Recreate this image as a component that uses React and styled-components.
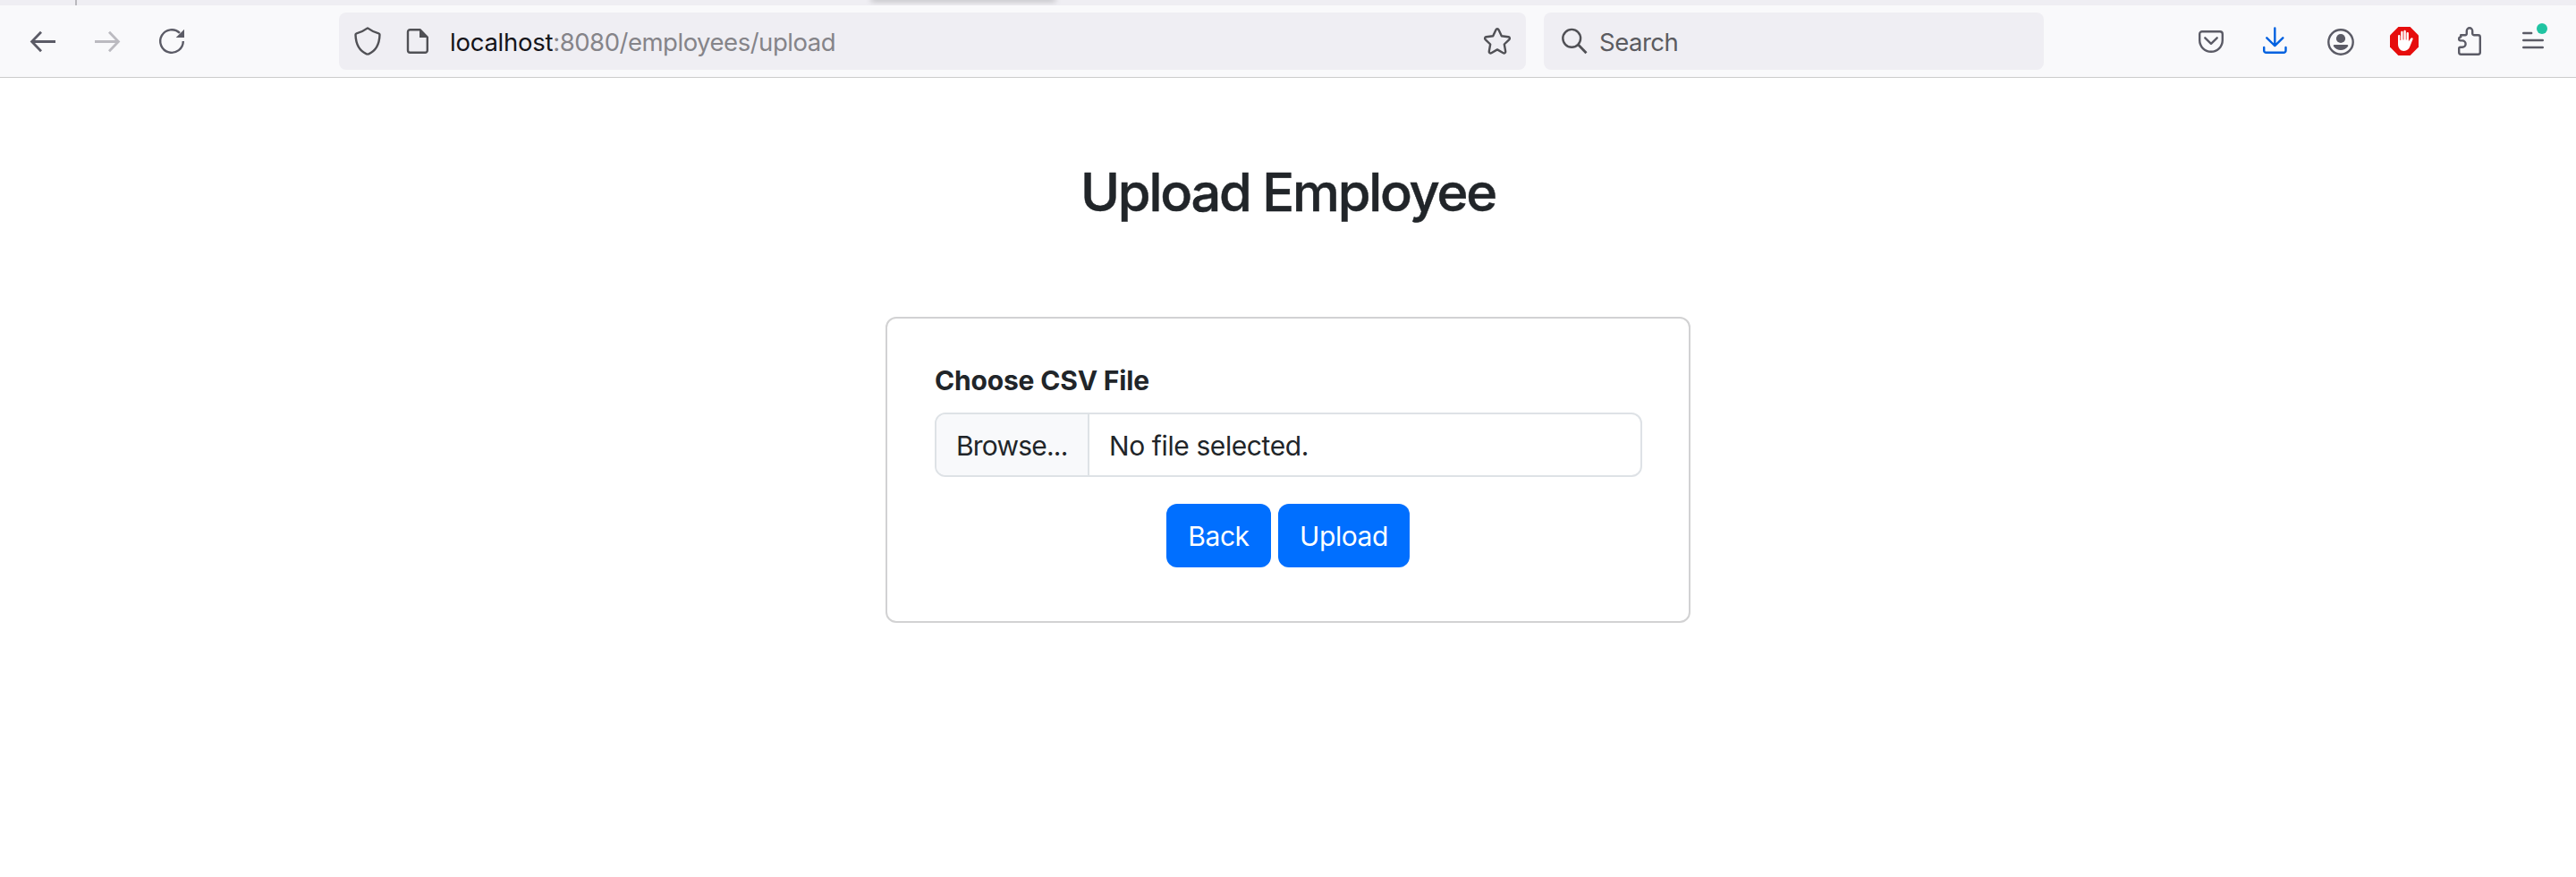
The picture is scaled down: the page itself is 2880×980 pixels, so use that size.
import React from "react";
import styled, { createGlobalStyle } from "styled-components";

const GlobalStyle = createGlobalStyle`
  * { box-sizing: border-box; }
  body {
    margin: 0;
    background: #fff;
    color: #212529;
    font-family: Inter, "Liberation Sans", sans-serif;
  }
`;

const TabStrip = styled.div`
  display: flex;
  height: 6px;
  padding-left: 84px;
  overflow: hidden;
  background: #efeef3;
`;

const TabDivider = styled.div`
  width: 2px;
  height: 6px;
  background: #bab9be;
`;

const ActiveTabEdge = styled.div`
  width: 204px;
  height: 1px;
  margin: -1px 0 0 889px;
  box-shadow: 0 0 6px 1px rgba(0, 0, 0, 0.35);
`;

const Toolbar = styled.header`
  display: flex;
  align-items: center;
  height: 81px;
  padding: 0 12px;
  background: #f9f9fb;
  border-bottom: 1px solid #ccc;
`;

const ToolButton = styled.button`
  display: flex;
  align-items: center;
  justify-content: center;
  width: 72px;
  height: 64px;
  padding: 0;
  border: 0;
  background: none;
  color: ${(p) => (p.$faded ? "#bbbac0" : "#5b5b66")};
`;

const Icon = styled.svg.attrs({ width: 32, height: 32, viewBox: "0 0 32 32", fill: "none" })`
  display: block;
  flex: none;
  overflow: visible;
  stroke-width: 2.4;
  stroke-linejoin: round;
`;

const Field = styled.div`
  display: flex;
  align-items: center;
  width: ${(p) => p.$width}px;
  height: 64px;
  margin-left: ${(p) => p.$offset}px;
  padding: 0 16px 0 ${(p) => p.$inset}px;
  border-radius: 8px;
  background: #efeef3;
  color: #505055;
`;

const Address = styled.span`
  flex: 1;
  padding-top: 2px;
  margin-left: ${(p) => p.$gap}px;
  font-size: 27.5px;
  line-height: 34px;
  letter-spacing: ${(p) => p.$tracking}px;
  color: ${(p) => p.$color};
  white-space: nowrap;
`;

const Host = styled.span`
  color: #15141a;
  letter-spacing: -0.25px;
`;

const PageIcon = styled(Icon)`
  margin-left: 24px;
`;

const Actions = styled.div`
  display: flex;
  margin-left: auto;
`;

const Main = styled.main`
  display: flex;
  flex-direction: column;
  align-items: center;
  padding-top: 92px;
`;

const Title = styled.h1`
  margin: 0;
  font-size: 59.5px;
  font-weight: 500;
  line-height: 71px;
  letter-spacing: -2.2px;
  -webkit-text-stroke: 0.5px #212529;
`;

const Card = styled.form`
  display: flex;
  flex-direction: column;
  width: 900px;
  height: 342px;
  margin-top: 104px;
  padding: 49px 52px 49px 53px;
  border: 2px solid #d2d2d3;
  border-radius: 12px;
`;

const Label = styled.label`
  font-size: 30px;
  font-weight: 700;
  line-height: 40px;
  letter-spacing: -0.18px;
`;

const FilePicker = styled.div`
  display: flex;
  height: 72px;
  margin-top: 16px;
  overflow: hidden;
  border: 2px solid #dee2e6;
  border-radius: 12px;
  font-size: 30px;
  line-height: 70px;
  white-space: nowrap;
`;

const Browse = styled.span`
  width: 171px;
  padding-left: 22px;
  border-right: 2px solid #dee2e6;
  background: #f8f9fb;
  letter-spacing: -0.8px;
`;

const FileName = styled.span`
  padding-left: 22px;
  letter-spacing: -0.4px;
`;

const ButtonRow = styled.div`
  display: flex;
  justify-content: center;
  gap: 8px;
  margin-top: 30px;
  padding-right: 1px;
`;

const PrimaryButton = styled.button`
  width: ${(p) => p.$width}px;
  height: 71px;
  padding: 1px 0 0;
  border: 0;
  border-radius: 12px;
  background: #006fff;
  color: #fff;
  font: 400 30px/70px Inter, "Liberation Sans", sans-serif;
  letter-spacing: -0.45px;
`;

const BackIcon = () => (
  <Icon stroke="currentColor">
    <path d="M30 16.5H4M14 5.8 3.6 16.5 14 27.2" strokeWidth="2.8" strokeLinejoin="miter" />
  </Icon>
);

const ForwardIcon = () => (
  <Icon stroke="currentColor">
    <path d="M2 16.5h26M18 5.8l10.4 10.7L18 27.2" strokeWidth="2.8" strokeLinejoin="miter" />
  </Icon>
);

const ReloadIcon = () => (
  <Icon stroke="currentColor">
    <path d="M28.8 16A12.8 12.8 0 1 1 25 6.9" />
    <path d="M30 2.7V12h-9.3z" fill="currentColor" stroke="none" />
  </Icon>
);

const ShieldIcon = () => (
  <Icon stroke="currentColor">
    <path d="M16 1.4c-3.8 2.8-8 4.9-12.4 5.9-.8.2-1.1.7-1.1 1.5C2.8 19 7.2 27 14.8 30.3c.8.4 1.6.4 2.4 0C24.8 27 29.2 19 29.5 8.8c0-.8-.3-1.3-1.1-1.5C24 6.3 19.8 4.200 16 1.4z" />
  </Icon>
);

const DocumentIcon = () => (
  <PageIcon stroke="currentColor">
    <path d="M7.5 3.2h11l8.3 8.3v14.8a2.5 2.5 0 0 1-2.5 2.5H7.5A2.5 2.5 0 0 1 5 26.3V5.7a2.5 2.5 0 0 1 2.5-2.5z" />
    <path d="M18 2.4 28 12H18z" fill="currentColor" stroke="none" />
  </PageIcon>
);

const StarIcon = () => (
  <Icon stroke="currentColor">
    <path d="M14.5 3.2c.6-1.3 2.4-1.3 3 0l3.3 7.1 7.6 1c1.5.2 2 1.9 1 2.9l-5.6 5.3 1.4 7.9c.2 1.5-1.2 2.5-2.5 1.8L16 25.4l-6.7 3.8c-1.3.7-2.7-.3-2.5-1.8l1.4-7.9-5.600-5.300c-1-1-.5-2.700 1-2.900l7.600-1z" />
  </Icon>
);

const SearchIcon = () => (
  <Icon stroke="currentColor">
    <circle cx="13.2" cy="12.8" r="9.9" />
    <path d="m20.3 19.8 9.2 9.4" strokeWidth="2.8" />
  </Icon>
);

const PocketIcon = () => (
  <Icon stroke="currentColor" strokeLinecap="round">
    <path d="M6 5.2h20a2.8 2.8 0 0 1 2.8 2.8v7a12.8 12.8 0 0 1-25.6 0V8A2.8 2.8 0 0 1 6 5.2z" />
    <path d="m9.3 12.3 6.7 6.5 6.7-6.5" />
  </Icon>
);

const DownloadIcon = () => (
  <Icon stroke="#0061e0" strokeLinecap="round">
    <path d="M15.3 1.5v19M6.3 12.3l9 8.8 9-8.8M3.2 23v3.4a2.4 2.4 0 0 0 2.4 2.4h19.5a2.4 2.4 0 0 0 2.4-2.4V23" />
  </Icon>
);

const AccountIcon = () => (
  <Icon stroke="currentColor">
    <circle cx="17" cy="17" r="13.7" />
    <circle cx="17" cy="13" r="5.1" fill="currentColor" stroke="none" />
    <path d="M10 20h14c1.3 0 1.7 1 .9 2-3.9 5.3-11.9 5.3-15.8 0-.8-1-.4-2 .9-2z" fill="currentColor" stroke="none" />
  </Icon>
);

const BlockerIcon = () => (
  <Icon>
    <path d="M9.4 0h13.2L32 9.4v13.2L22.600 32H9.400L0 22.600V9.400z" fill="#e60d0d" />
    <path
      d="M9 10.200V19c0 4.700 2.600 8 6.700 8 3.300 0 5.300-2 6.500-4.700l3.400-8.500c.5-1.500-1.500-2.300-2.500-.8l-2.200 3.200V7.200c0-1.700-2.400-1.700-2.400 0v7.200h-.7V5c0-1.700-2.400-1.700-2.400 0v9.400h-.8V6c0-1.700-2.400-1.700-2.400 0v9h-.8v-4.800c0-1.500-2.400-1.500-2.400 0z"
      fill="#fff"
    />
  </Icon>
);

const ExtensionIcon = () => (
  <Icon stroke="currentColor">
    <path d="M7.2 9.2h5a1.6 1.6 0 0 0 1.6-1.6V4.5a3.2 3.2 0 0 1 6.4 0v3.1a1.6 1.6 0 0 0 1.6 1.6h4.8a2.2 2.2 0 0 1 2.2 2.2v17.2a2.2 2.2 0 0 1-2.2 2.2H7.4a2.2 2.2 0 0 1-2.2-2.2v-4.4a1.4 1.4 0 0 1 1.4-1.4h2.3a3.7 3.7 0 0 0 0-7.4H6.600a1.400 1.400 0 0 1-1.400-1.400v-.6a2 2 0 0 1 2-2z" />
  </Icon>
);

const MenuIcon = () => (
  <Icon stroke="currentColor" strokeLinecap="round">
    <path d="M5.2 7h9M5.2 15h21.6M5.2 23h21.6" />
    <circle cx="26" cy="2" r="6" fill="#20c4a2" stroke="none" />
  </Icon>
);

export default function App() {
  return (
    <>
      <GlobalStyle />
      <TabStrip>
        <TabDivider />
        <ActiveTabEdge />
      </TabStrip>
      <Toolbar>
        <ToolButton aria-label="Back"><BackIcon /></ToolButton>
        <ToolButton aria-label="Forward" $faded><ForwardIcon /></ToolButton>
        <ToolButton aria-label="Reload"><ReloadIcon /></ToolButton>
        <Field $width={1327} $offset={151} $inset={16}>
          <ShieldIcon />
          <DocumentIcon />
          <Address $color="#858489" $gap={20} $tracking={-0.48}>
            <Host>localhost</Host>:8080/employees/upload
          </Address>
          <StarIcon />
        </Field>
        <Field $width={559} $offset={20} $inset={18}>
          <SearchIcon />
          <Address $color="#5b5b60" $gap={12} $tracking={-0.5}>Search</Address>
        </Field>
        <Actions>
          <ToolButton aria-label="Pocket"><PocketIcon /></ToolButton>
          <ToolButton aria-label="Downloads"><DownloadIcon /></ToolButton>
          <ToolButton aria-label="Account"><AccountIcon /></ToolButton>
          <ToolButton aria-label="Blocker"><BlockerIcon /></ToolButton>
          <ToolButton aria-label="Extensions"><ExtensionIcon /></ToolButton>
          <ToolButton aria-label="Menu"><MenuIcon /></ToolButton>
        </Actions>
      </Toolbar>
      <Main>
        <Title>Upload Employee</Title>
        <Card onSubmit={(e) => e.preventDefault()}>
          <Label>Choose CSV File</Label>
          <FilePicker>
            <Browse>Browse...</Browse>
            <FileName>No file selected.</FileName>
          </FilePicker>
          <ButtonRow>
            <PrimaryButton type="button" $width={117}>Back</PrimaryButton>
            <PrimaryButton $width={147}>Upload</PrimaryButton>
          </ButtonRow>
        </Card>
      </Main>
    </>
  );
}
